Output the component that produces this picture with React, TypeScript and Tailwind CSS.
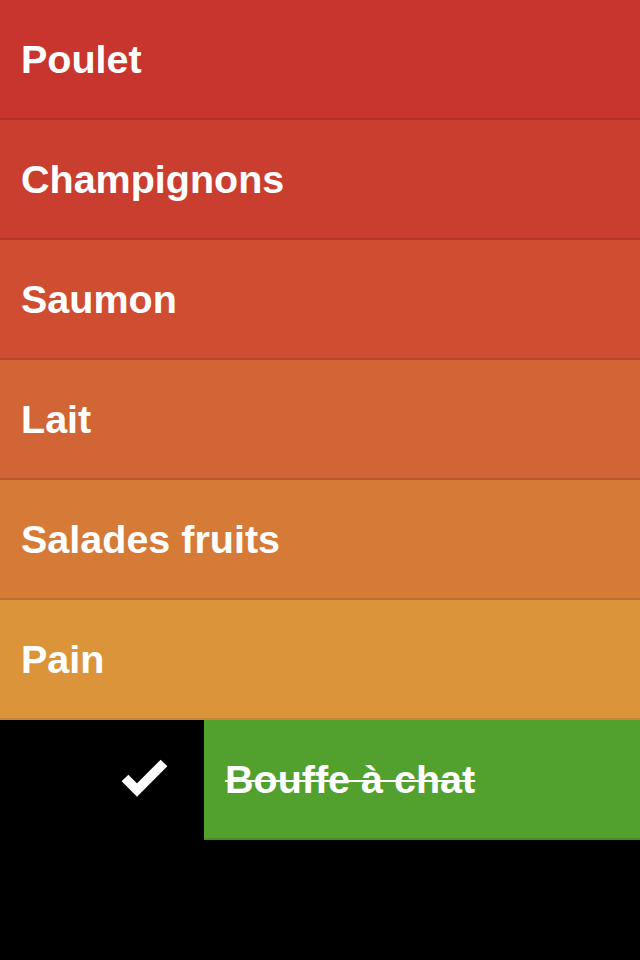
const rows = [
  { label: "Poulet", bg: "bg-[#c8352e]" },
  { label: "Champignons", bg: "bg-[#ca3e30]" },
  { label: "Saumon", bg: "bg-[#cf4d31]" },
  { label: "Lait", bg: "bg-[#d26535]" },
  { label: "Salades fruits", bg: "bg-[#d67b37]" },
  { label: "Pain", bg: "bg-[#db9439]" },
];

export default function App() {
  return (
    <main
      className="min-h-screen bg-black flex flex-col"
      style={{ fontFamily: '"Liberation Sans", Arial, sans-serif' }}
    >
      {rows.map((r) => (
        <div
          key={r.label}
          className={`h-[120px] flex items-center pl-[21px] pr-5 pt-[2px] border-b-2 border-black/10 ${r.bg}`}
        >
          <span className="text-white font-bold text-[39.5px] leading-none">{r.label}</span>
        </div>
      ))}
      <div className="h-[120px] flex">
        <div className="w-[204px] flex items-center justify-end pr-[36px] pb-[2px]">
          <svg width="48" height="40" viewBox="120 760 48 40">
            <polyline
              points="125,779 137,791 164,764"
              fill="none"
              stroke="#fff"
              strokeWidth="9.5"
              strokeLinecap="butt"
              strokeLinejoin="miter"
            />
          </svg>
        </div>
        <div className="flex-1 flex items-center pl-[21px] pr-5 pt-[2px] bg-[#52a02e] border-b-2 border-black/10">
          <span className="text-white font-bold text-[39.5px] leading-none line-through decoration-2">
            Bouffe à chat
          </span>
        </div>
      </div>
    </main>
  );
}
